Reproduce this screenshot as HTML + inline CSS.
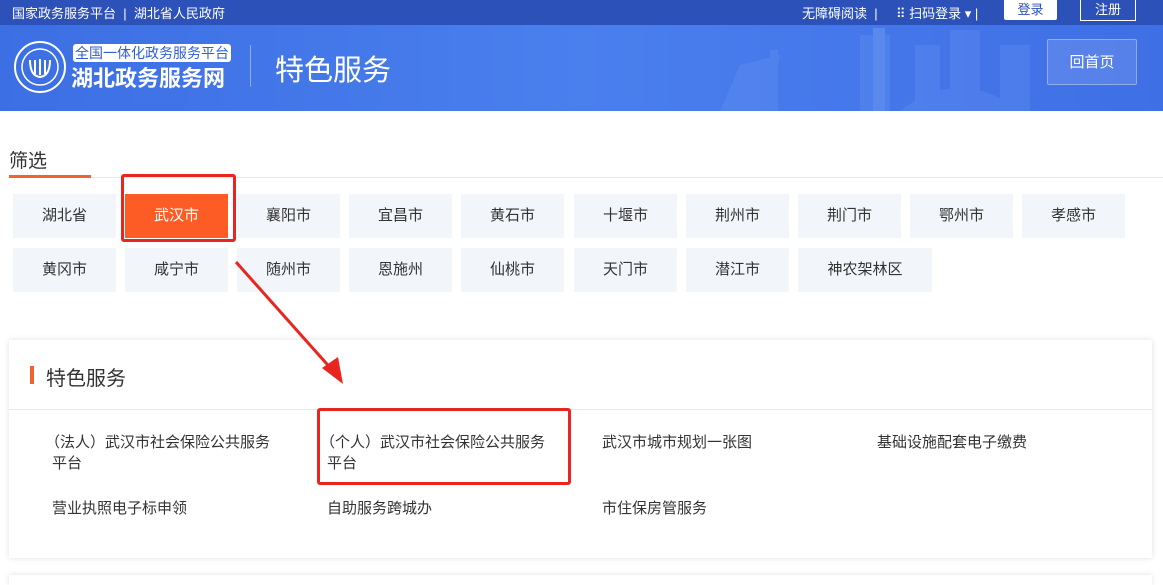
<!DOCTYPE html><html><head><meta charset="utf-8"><style>
*{margin:0;padding:0;box-sizing:border-box}
body{width:1163px;height:582px;overflow:hidden;background:#fff;font-family:"Liberation Sans","Noto Sans CJK SC",sans-serif;position:relative}
.top{position:absolute;left:0;top:0;width:1163px;height:25px;background:#2c51b9;color:#fff;font-size:13px}
.top span{position:absolute;top:3px}
.hd{position:absolute;left:0;top:25px;width:1163px;height:86px;background:linear-gradient(90deg,#3c6fe3,#4a7fee 50%,#3f6fe5)}
.cell{position:absolute;width:103px;height:44px;background:#f2f5fa;color:#333;font-size:15px;text-align:center;line-height:44px}
.it{position:absolute;font-size:15px;color:#333;line-height:21px}
</style></head><body>
<div class="top">
<span style="left:12px">国家政务服务平台 &nbsp;|&nbsp; 湖北省人民政府</span>
<span style="left:802px">无障碍阅读 &nbsp;|</span>
<span style="left:896px">⠿ 扫码登录 ▾ |</span>
<div style="position:absolute;left:1004px;top:0;width:53px;height:20px;background:#fff;color:#2c51b9;font-size:13px;text-align:center;line-height:20px;border-radius:0 0 2px 2px">登录</div>
<div style="position:absolute;left:1080px;top:0;width:56px;height:21px;border:1px solid #fff;border-top:0;color:#fff;font-size:13px;text-align:center;line-height:20px">注册</div>
</div>
<div class="hd">
<svg style="position:absolute;left:700px;top:0" width="380" height="86"><g fill="#6f9bf5" opacity=".25"><rect x="160" y="10" width="30" height="76"/><rect x="215" y="20" width="25" height="66"/><rect x="250" y="5" width="30" height="81"/><rect x="70" y="25" width="8" height="61"/><rect x="173" y="3" width="12" height="83" fill="#9cbcf8"/><path d="M20 86 L40 40 L80 30 L70 86Z"/><path d="M200 86 Q260 40 320 86Z"/><rect x="300" y="20" width="30" height="66"/></g></svg>
<svg style="position:absolute;left:13px;top:15px" width="54" height="54"><circle cx="27" cy="27" r="25" fill="none" stroke="#fff" stroke-width="2"/><circle cx="27" cy="27" r="18" fill="none" stroke="#fff" stroke-width="1.5"/><path d="M17 20 Q17 36 27 37 Q37 36 37 20 M22 20v14 M27 19v16 M32 20v14" fill="none" stroke="#fff" stroke-width="2"/></svg>
<div style="position:absolute;left:73px;top:19px;width:158px;height:18px;background:#fff;border-radius:3px;color:#2f5fd6;font-size:14px;line-height:18px;text-align:center">全国一体化政务服务平台</div>
<div style="position:absolute;left:71px;top:36px;color:#fff;font-size:22px;font-weight:bold">湖北政务服务网</div>
<div style="position:absolute;left:250px;top:20px;width:1px;height:42px;background:rgba(255,255,255,.4)"></div>
<div style="position:absolute;left:275px;top:22px;color:#fff;font-size:29px">特色服务</div>
<div style="position:absolute;left:1047px;top:14px;width:90px;height:46px;border:1px solid rgba(255,255,255,.35);background:rgba(255,255,255,.12);color:#fff;font-size:15px;text-align:center;line-height:46px;border-radius:2px">回首页</div>
</div>
<div style="position:absolute;left:9px;top:146px;font-size:19px;color:#333">筛选</div>
<div style="position:absolute;left:9px;top:175px;width:82px;height:3px;background:#f26130"></div>
<div style="position:absolute;left:91px;top:177px;width:1072px;height:1px;background:#e8e8e8"></div>
<div class="cell" style="left:13px;top:194px">湖北省</div>
<div class="cell" style="left:125px;top:194px;background:#fd5c24;color:#fff">武汉市</div>
<div class="cell" style="left:237px;top:194px">襄阳市</div>
<div class="cell" style="left:349px;top:194px">宜昌市</div>
<div class="cell" style="left:461px;top:194px">黄石市</div>
<div class="cell" style="left:574px;top:194px">十堰市</div>
<div class="cell" style="left:686px;top:194px">荆州市</div>
<div class="cell" style="left:798px;top:194px">荆门市</div>
<div class="cell" style="left:910px;top:194px">鄂州市</div>
<div class="cell" style="left:1022px;top:194px">孝感市</div>
<div class="cell" style="left:13px;top:248px">黄冈市</div>
<div class="cell" style="left:125px;top:248px">咸宁市</div>
<div class="cell" style="left:237px;top:248px">随州市</div>
<div class="cell" style="left:349px;top:248px">恩施州</div>
<div class="cell" style="left:461px;top:248px">仙桃市</div>
<div class="cell" style="left:574px;top:248px">天门市</div>
<div class="cell" style="left:686px;top:248px">潜江市</div>
<div class="cell" style="left:798px;top:248px;width:134px">神农架林区</div>
<div style="position:absolute;left:121px;top:174px;width:115px;height:68px;border:3px solid #e8261f;border-radius:3px"></div>
<div style="position:absolute;left:9px;top:340px;width:1143px;height:218px;background:#fff;box-shadow:0 0 6px rgba(0,0,0,.12)"></div>
<div style="position:absolute;left:9px;top:575px;width:1143px;height:10px;box-shadow:0 0 6px rgba(0,0,0,.12)"></div>
<div style="position:absolute;left:30px;top:366px;width:4px;height:18px;background:#f26130"></div>
<div style="position:absolute;left:46px;top:362px;font-size:20px;color:#333">特色服务</div>
<div style="position:absolute;left:9px;top:409px;width:1143px;height:1px;background:#e6e6e6"></div>
<div class="it" style="left:45px;top:432px;width:260px">（法人）武汉市社会保险公共服务<br><span style="margin-left:7px">平台</span></div>
<div class="it" style="left:320px;top:432px;width:260px">（个人）武汉市社会保险公共服务<br><span style="margin-left:7px">平台</span></div>
<div class="it" style="left:602px;top:432px">武汉市城市规划一张图</div>
<div class="it" style="left:877px;top:432px">基础设施配套电子缴费</div>
<div class="it" style="left:52px;top:498px">营业执照电子标申领</div>
<div class="it" style="left:327px;top:498px">自助服务跨城办</div>
<div class="it" style="left:602px;top:498px">市住保房管服务</div>
<div style="position:absolute;left:317px;top:408px;width:254px;height:77px;border:3px solid #e8261f;border-radius:3px"></div>
<svg style="position:absolute;left:0;top:0" width="1163" height="582"><line x1="236" y1="262" x2="334" y2="372" stroke="#e8261f" stroke-width="3"/><path d="M343 384 L322 368 L338 357Z" fill="#e8261f"/></svg>
</body></html>
